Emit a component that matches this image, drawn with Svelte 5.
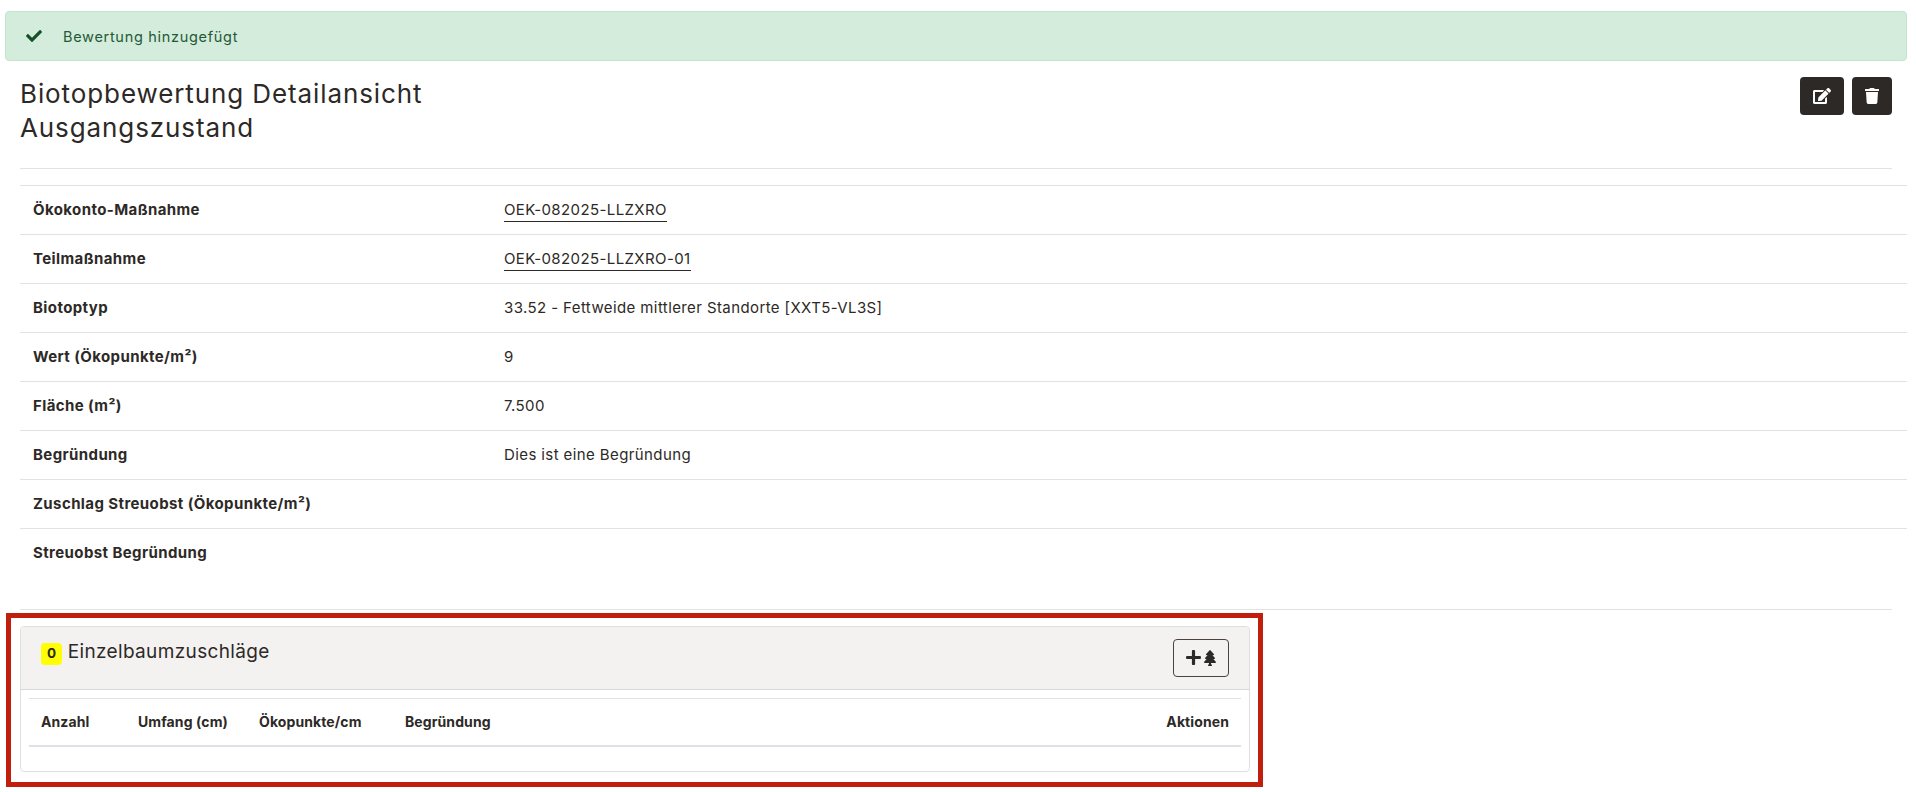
<script>
  const rows = [
    { label: 'Ökokonto-Maßnahme', value: 'OEK-082025-LLZXRO', link: true },
    { label: 'Teilmaßnahme', value: 'OEK-082025-LLZXRO-01', link: true },
    { label: 'Biotoptyp', value: '33.52 - Fettweide mittlerer Standorte [XXT5-VL3S]' },
    { label: 'Wert (Ökopunkte/m²)', value: '9' },
    { label: 'Fläche (m²)', value: '7.500' },
    { label: 'Begründung', value: 'Dies ist eine Begründung' },
    { label: 'Zuschlag Streuobst (Ökopunkte/m²)', value: '' },
    { label: 'Streuobst Begründung', value: '' }
  ];
</script>

<div class="page">
  <div class="alert">
    <svg class="check" viewBox="0 0 512 512" width="16" height="16"><path d="M173.9 439.4 7.5 273c-10-10-10-26.200 0-36.200l36.200-36.200c10-10 26.200-10 36.200 0L192 312.700 432.100 72.600c10-10 26.200-10 36.200 0l36.200 36.200c10 10 10 26.200 0 36.200L210.100 439.400c-10 10-26.200 10-36.200 0z"/></svg>
    <span>Bewertung hinzugefügt</span>
  </div>

  <div class="content">
    <div class="head">
      <h1>Biotopbewertung Detailansicht<br />Ausgangszustand</h1>
      <div class="actions">
        <button class="dark edit" aria-label="Bearbeiten">
          <svg viewBox="0 0 576 512" width="18" height="16"><path d="M402.600 83.200l90.200 90.200c3.800 3.800 3.800 10 0 13.800L274.400 405.600l-92.800 10.300c-12.400 1.400-22.900-9.100-21.500-21.500l10.300-92.800L388.800 83.200c3.800-3.800 10-3.800 13.800 0zm162-22.900l-48.800-48.800c-15.200-15.200-39.900-15.200-55.200 0l-35.400 35.400c-3.800 3.800-3.800 10 0 13.800l90.200 90.200c3.800 3.800 10 3.800 13.800 0l35.400-35.400c15.200-15.300 15.200-40 0-55.200zM384 346.200V448H64V128h229.800c3.200 0 6.200-1.300 8.500-3.500l40-40c7.600-7.600 2.200-20.500-8.500-20.500H48C21.500 64 0 85.500 0 112v352c0 26.500 21.500 48 48 48h352c26.500 0 48-21.500 48-48V306.200c0-10.700-12.900-16-20.500-8.500l-40 40c-2.200 2.300-3.500 5.300-3.500 8.500z"/></svg>
        </button>
        <button class="dark trash" aria-label="Löschen">
          <svg viewBox="0 0 448 512" width="14" height="16"><path d="M432 32H312l-9.400-18.700A24 24 0 0 0 281.100 0H166.800a23.700 23.700 0 0 0-21.400 13.300L136 32H16A16 16 0 0 0 0 48v32a16 16 0 0 0 16 16h416a16 16 0 0 0 16-16V48a16 16 0 0 0-16-16zM53.200 467a48 48 0 0 0 47.900 45h245.800a48 48 0 0 0 47.900-45L416 128H32z"/></svg>
        </button>
      </div>
    </div>
    <hr />
  </div>

  <div class="table-wrap">
    <table class="details">
      <tbody>
        {#each rows as row}
          <tr>
            <th>{row.label}</th>
            <td>
              {#if row.link}<a href="#top">{row.value}</a>{:else}{row.value}{/if}
            </td>
          </tr>
        {/each}
      </tbody>
    </table>
  </div>

  <div class="content">
    <hr class="bottom" />
    <div class="card">
      <div class="annotation"></div>
      <div class="card-head">
        <h2><span class="badge">0</span> Einzelbaumzuschläge</h2>
        <button class="outline" aria-label="Einzelbaum hinzufügen">
          <svg viewBox="0 0 448 512" width="15" height="17"><path d="M416 208H272V64c0-17.670-14.330-32-32-32h-32c-17.670 0-32 14.330-32 32v144H32c-17.670 0-32 14.330-32 32v32c0 17.670 14.330 32 32 32h144v144c0 17.670 14.330 32 32 32h32c17.670 0 32-14.330 32-32V304h144c17.670 0 32-14.330 32-32v-32c0-17.670-14.330-32-32-32z"/></svg>
          <svg viewBox="0 0 384 512" width="12" height="16"><path d="M378.300 378.500 298.400 288h30.600c9.500 0 18.100-5.400 21.800-13.700 3.700-8.300 2-17.900-4.500-24.500L268.100 168h29c9.400 0 18-5.200 21.800-13.400 3.900-8.100 2.300-17.700-3.900-24.300L203.700 7.500c-6.100-6.600-17.300-6.600-23.400 0L68.900 130.300c-6.200 6.600-7.800 16.200-3.900 24.300 3.800 8.200 12.400 13.400 21.800 13.400h29l-78.200 81.800c-6.500 6.600-8.200 16.200-4.500 24.500 3.700 8.300 12.300 13.700 21.800 13.700h30.600L5.700 378.500c-6 6.700-7.300 16.200-3.400 24.200 3.900 8 12.300 13.300 21.700 13.300H160v24.900l-30.300 48c-5.300 10.600 2.400 23.100 14.300 23.100h96c11.900 0 19.600-12.500 14.300-23.100l-30.300-48V416h136c9.400 0 17.800-5.300 21.700-13.300 3.900-8 2.600-17.500-3.400-24.200z"/></svg>
        </button>
      </div>
      <div class="card-body">
        <table class="list">
          <thead>
            <tr>
              <th class="c1">Anzahl</th>
              <th class="c2">Umfang (cm)</th>
              <th class="c3">Ökopunkte/cm</th>
              <th class="c4">Begründung</th>
              <th class="c5">Aktionen</th>
            </tr>
          </thead>
        </table>
      </div>
    </div>
  </div>
</div>

<style>
  :global(body) {
    margin: 0;
    background: #fff;
    font-family: Inter, "Noto Sans", sans-serif;
    color: #2d2926;
  }
  .page {
    height: 792px;
    overflow: hidden;
    box-sizing: border-box;
    padding-top: 11px;
  }
  .alert {
    margin: 0 9px 0 5px;
    height: 50px;
    box-sizing: border-box;
    display: flex;
    align-items: center;
    padding-left: 20px;
    gap: 21px;
    background: #d4ecdc;
    border: 1px solid #c3e4cd;
    border-radius: 4px;
    color: #1f5a36;
    font-size: 14.500px;
    letter-spacing: 0.7px;
  }
  .check {
    fill: #155126;
    flex: none;
  }
  .content {
    padding: 0 24px 0 20px;
  }
  .head {
    display: flex;
    justify-content: space-between;
    height: 107px;
  }
  h1 {
    margin: 16px 0 0;
    font-size: 26px;
    font-weight: 400;
    line-height: 34px;
    letter-spacing: 0.9px;
  }
  .actions {
    display: flex;
    gap: 8px;
    margin-top: 16px;
  }
  button {
    display: flex;
    align-items: center;
    justify-content: center;
    padding: 0;
    border-radius: 4px;
  }
  .dark {
    height: 38px;
    background: #2d2926;
    border: 0;
  }
  .dark.edit { width: 44px; }
  .dark.trash { width: 40px; }
  .dark svg { fill: #fff; }
  hr {
    margin: 0;
    border: 0;
    border-top: 1px solid #e2e2e2;
  }
  .table-wrap {
    padding: 16px 9px 0 20px;
  }
  .details {
    width: 100%;
    border-collapse: collapse;
    font-size: 15px;
    letter-spacing: 0.4px;
  }
  .details tr {
    height: 49px;
    border-top: 1px solid #e2e2e2;
  }
  .details th {
    width: 471px;
    padding: 0 0 2px 13px;
    text-align: left;
    font-weight: 700;
  }
  .details td {
    padding: 0 0 2px;
  }
  .details a {
    color: inherit;
    text-decoration: none;
    border-bottom: 1px solid #2d2926;
    padding-bottom: 2px;
  }
  .bottom {
    margin-top: 31px;
  }
  .card {
    position: relative;
    width: 1230px;
    height: 146px;
    box-sizing: border-box;
    margin-top: 16px;
    border: 1px solid #dfdfdf;
    border-radius: 4px;
  }
  .annotation {
    position: absolute;
    inset: -14px -14px -16px -15px;
    border: 5px solid #c01f0e;
    pointer-events: none;
  }
  .card-head {
    height: 63px;
    box-sizing: border-box;
    display: flex;
    justify-content: space-between;
    padding: 12px 20px 0;
    background: #f3f2f1;
    border-bottom: 1px solid #d8d8d8;
    border-radius: 4px 4px 0 0;
  }
  h2 {
    margin: 0;
    font-size: 19px;
    font-weight: 400;
    line-height: 26px;
    letter-spacing: 0.35px;
  }
  .badge {
    display: inline-block;
    min-width: 21px;
    height: 22px;
    line-height: 20px;
    border-radius: 4px;
    background: #ff0;
    font-size: 13.500px;
    font-weight: 700;
    letter-spacing: 0;
    text-align: center;
  }
  .outline {
    width: 56px;
    height: 38px;
    margin: 0;
    gap: 3px;
    background: transparent;
    border: 1px solid #4a4340;
  }
  .outline svg { fill: #2d2926; }
  .card-body {
    padding: 8px 8px 0;
  }
  .list {
    width: 100%;
    border-collapse: collapse;
    font-size: 14px;
    letter-spacing: 0.1px;
  }
  .list th {
    height: 46px;
    padding: 0 12px;
    text-align: left;
    font-weight: 700;
    border-top: 1px solid #dee2e6;
    border-bottom: 2px solid #dee2e6;
  }
  .list .c1 { width: 73px; }
  .list .c2 { width: 97px; }
  .list .c3 { width: 122px; }
  .list .c5 { text-align: right; }
</style>
